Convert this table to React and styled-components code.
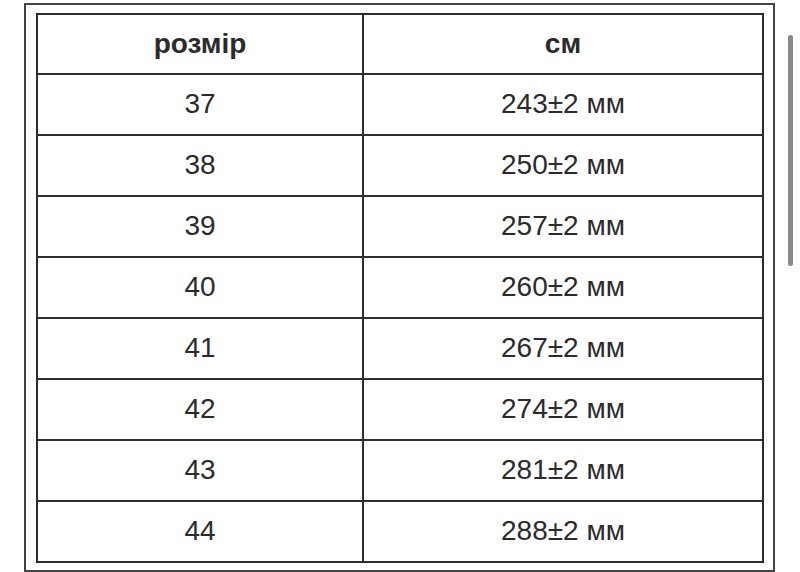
import React from "react";
import styled, { createGlobalStyle } from "styled-components";

const sizes = [
  ["37", "243±2 мм"],
  ["38", "250±2 мм"],
  ["39", "257±2 мм"],
  ["40", "260±2 мм"],
  ["41", "267±2 мм"],
  ["42", "274±2 мм"],
  ["43", "281±2 мм"],
  ["44", "288±2 мм"],
];

const App = () => {
  return (
    <>
      <GlobalStyle />
      <Page>
        <Frame>
          <SizeTable>
            <thead>
              <tr>
                <HeadCell $wide={false}>розмір</HeadCell>
                <HeadCell $wide>см</HeadCell>
              </tr>
            </thead>
            <tbody>
              {sizes.map(([size, length]) => (
                <tr key={size}>
                  <Cell>{size}</Cell>
                  <Cell>{length}</Cell>
                </tr>
              ))}
            </tbody>
          </SizeTable>
        </Frame>
        <ScrollThumb />
      </Page>
    </>
  );
};

export default App;

const GlobalStyle = createGlobalStyle`
  html, body {
    margin: 0;
    padding: 0;
    background: #fff;
    overflow: hidden;
  }
`;

const Page = styled.div`
  position: relative;
  width: 800px;
  height: 572px;
  padding: 3px 0 0 24px;
  box-sizing: border-box;
  font-family: "Liberation Sans", Arial, sans-serif;
  color: #2b2b2b;
`;

const Frame = styled.div`
  width: 751px;
  height: 569px;
  box-sizing: border-box;
  border: 2px solid #444;
  padding: 8px 9px 0 10px;
`;

const SizeTable = styled.table`
  width: 728px;
  border-collapse: collapse;
  table-layout: fixed;
  border: 2px solid #2e2e2e;
`;

const HeadCell = styled.th`
  width: ${(p) => (p.$wide ? "auto" : "324px")};
  height: 57px;
  padding: 0 0 1px;
  border: 2px solid #2e2e2e;
  font-size: 28px;
  font-weight: 700;
  text-align: center;
  vertical-align: middle;
  line-height: 1;
`;

const Cell = styled.td`
  height: 57px;
  padding: 0 0 2px;
  border: 2px solid #2e2e2e;
  font-size: 28px;
  text-align: center;
  vertical-align: middle;
  line-height: 1;
`;

const ScrollThumb = styled.div`
  position: absolute;
  left: 788px;
  top: 35px;
  width: 5px;
  height: 231px;
  border-radius: 3px;
  background: #8a8a8a;
`;
